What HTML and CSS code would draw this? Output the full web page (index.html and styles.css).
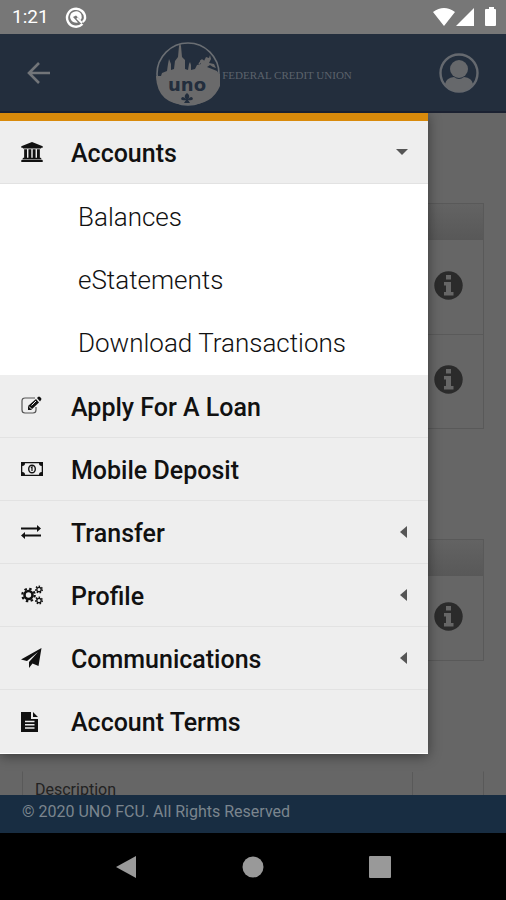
FILE: index.html
```html
<!DOCTYPE html>
<html lang="en">
<head>
<meta charset="utf-8">
<meta name="viewport" content="width=device-width, initial-scale=1">
<title>UNO Federal Credit Union</title>
<link rel="stylesheet" href="styles.css">
</head>
<body>
<div class="status">
  <span class="clock">1:21</span>
  <svg width="22" height="22" viewBox="0 0 22 22"><path d="M17.500 18A9 9 0 1 1 20 12.500Q19.500 15 17.500 16" fill="none" stroke="#fff" stroke-width="2.400"/><path d="M5 11a6 6 0 0 1 11.500-2q.8 3-.8 5L11 9.500 8 11l5 5.500Q6 17.500 5 11z" fill="#fff"/><path d="M12 12l5 5" stroke="#fff" stroke-width="2"/></svg>
  <svg class="signals" width="64" height="20" viewBox="0 0 64 20"><path d="M0 5Q11-3 22 5L11 19zM41 1V19H23zM53 2h3V0h5v2h1q1 0 1 1v15q0 1-1 1h-9q-1 0-1-1V3q0-1 1-1z" fill="#fff"/></svg>
</div>
<header class="bar">
  <button class="plain" aria-label="Back"><svg width="24" height="24" viewBox="0 0 24 24"><path d="M23 12H3M12 2L2 12l10 10" fill="none" stroke="#727579" stroke-width="2.600"/></svg></button>
  <a class="brand" href="#">
    <svg width="66" height="66" viewBox="0 0 66 66"><circle cx="34" cy="34" r="31" fill="none" stroke="#6a6e73" stroke-width="1.600"/><path d="M2 36h5l1-3 5-2 1-7 1-5 2 5v6l3-1 1-8 3-4 1-11 1-3 1 3 1 11 3 3v9l3 1 1-6 1-2 1 3v5l4-1 2-4 4-1-1-4 4 1 2-4 3 1 1-3 1 4-2 4 5 1 2 4-3-1-3-2-3 2 5 2 5 2 2 3h4Q65 65 34 65 3 65 2 36z" fill="#6a6a6b"/><path d="M45 24l3-4 3 2" fill="none" stroke="#6a6a6b" stroke-width="1.500"/><text class="logo-word" x="33" y="51" text-anchor="middle">uno</text><path d="M33 53q4 3 1 6 4-4 5 0-1 2-5 1l2 3h-6l2-3q-4 1-5-1 1-4 5 0-3-3 1-6z" fill="#232e3d"/></svg>
    <span>FEDERAL CREDIT UNION</span>
  </a>
  <button class="plain profile" aria-label="My profile"><svg width="40" height="40" viewBox="0 0 40 40"><circle cx="20" cy="20" r="18.500" fill="none" stroke="#65696f" stroke-width="2.400"/><path d="M6 31q1-6 9-7 5 4 10 0 8 1 9 7-5 8-14 8T6 31z" fill="#66686b"/><circle cx="20" cy="16" r="9" fill="#66686b"/></svg></button>
</header>
<main class="page">
  <div class="cards">
    <section class="card">
      <div class="card-head"></div>
      <div class="card-row"><button class="plain" aria-label="Details"><svg width="29" height="29" viewBox="0 0 29 29"><circle cx="14.500" cy="14.500" r="14.200" fill="#2b2b2b"/><path d="M12 4h5v4.500h-5zM10 11h7v10h2.500v3.500H10V21h2v-6.500h-2z" fill="#666"/></svg></button></div>
      <div class="card-row"><button class="plain" aria-label="Details"><svg width="29" height="29" viewBox="0 0 29 29"><circle cx="14.500" cy="14.500" r="14.200" fill="#2b2b2b"/><path d="M12 4h5v4.500h-5zM10 11h7v10h2.500v3.500H10V21h2v-6.500h-2z" fill="#666"/></svg></button></div>
    </section>
    <section class="card">
      <div class="card-head"></div>
      <div class="card-row short"><button class="plain" aria-label="Details"><svg width="29" height="29" viewBox="0 0 29 29"><circle cx="14.500" cy="14.500" r="14.200" fill="#2b2b2b"/><path d="M12 4h5v4.500h-5zM10 11h7v10h2.500v3.500H10V21h2v-6.500h-2z" fill="#666"/></svg></button></div>
    </section>
    <section class="card history">
      <div class="columns"><span>Description</span><span></span></div>
    </section>
  </div>
  <nav class="menu">
    <a class="item" href="#"><svg width="22" height="20" viewBox="0 0 1920 1792"><path d="M960 0l960 384v128h-128q0 26-20.500 45t-48.500 19h-1526q-28 0-48.500-19t-20.500-45h-128v-128zM256 640h256v768h128v-768h256v768h128v-768h256v768h128v-768h256v768h59q28 0 48.500 19t20.500 45v64h-1664v-64q0-26 20.500-45t48.500-19h59zM1851 1600q28 0 48.500 19t20.500 45v128h-1920v-128q0-26 20.500-45t48.500-19z"/></svg><span>Accounts</span><svg class="caret" width="12" height="12" viewBox="0 0 12 12"><path d="M0 3h12L6 9z"/></svg></a>
    <div class="submenu">
      <a href="#">Balances</a>
      <a href="#">eStatements</a>
      <a href="#">Download Transactions</a>
    </div>
    <a class="item" href="#"><svg width="22" height="20" viewBox="0 0 22 20"><path d="M14 2H4Q1 2 1 5v9q0 3 3 3h8q3 0 3-3v-3" fill="none" stroke="#555" stroke-width="1.200"/><path d="M7 14v-4l8-7 3 3.500-8 7.500zM16 2l1-1q1-1 2 0l1 1q1 1 0 2l-1 1.500z"/><path d="M8 10.500l2.500 2.500M10.500 9.500L15 5" stroke="#eee"/></svg><span>Apply For A Loan</span></a>
    <a class="item" href="#"><svg width="22" height="20" viewBox="0 0 22 20"><path fill-rule="evenodd" d="M0 3h22v14H0zM4 4.300Q4 7 1.300 7v6Q4 13 4 15.700h14q0-2.700 2.700-2.700V7Q18 7 18 4.300z"/><ellipse cx="11" cy="10" rx="3.300" ry="3.800" fill="none" stroke="#111" stroke-width="1.400"/><path d="M10 9l1-1v4" fill="none" stroke="#111" stroke-width="1.200"/></svg><span>Mobile Deposit</span></a>
    <a class="item" href="#"><svg width="22" height="20" viewBox="0 0 22 20"><path d="M0 5.500h16V3l4 3.500-4 3.500V7.500H0zM20 12.500H4V10l-4 3.500L4 17v-2.500h16z"/></svg><span>Transfer</span><svg class="caret" width="12" height="12" viewBox="0 0 12 12"><path d="M11 0v12L4 6z"/></svg></a>
    <a class="item" href="#"><svg width="22" height="20" viewBox="0 0 22 20"><g fill="none" stroke="#111"><circle cx="7.500" cy="10" r="4" stroke-width="2.600"/><circle cx="7.500" cy="10" r="6.200" stroke-width="2.200" stroke-dasharray="2.435 2.435"/><circle cx="18" cy="4.500" r="2.200" stroke-width="1.300"/><circle cx="18" cy="4.500" r="3.300" stroke-width="1.400" stroke-dasharray="1.480 1.480"/><circle cx="18" cy="15.500" r="2.200" stroke-width="1.300"/><circle cx="18" cy="15.500" r="3.300" stroke-width="1.400" stroke-dasharray="1.480 1.480"/></g></svg><span>Profile</span><svg class="caret" width="12" height="12" viewBox="0 0 12 12"><path d="M11 0v12L4 6z"/></svg></a>
    <a class="item" href="#"><svg width="22" height="20" viewBox="0 0 22 20"><path d="M20.500 0l-3 18-6-2.500L8 20v-6L17 4 6 13l-6-1.500z"/></svg><span>Communications</span><svg class="caret" width="12" height="12" viewBox="0 0 12 12"><path d="M11 0v12L4 6z"/></svg></a>
    <a class="item" href="#"><svg width="22" height="20" viewBox="0 0 22 20"><path d="M0 0h10v7h7v13H0zM12 0l5 5h-5z"/><path d="M4 9.500h9.500M4 12.700h9.500M4 16h9.500" stroke="#eee" stroke-width="1.400"/></svg><span>Account Terms</span></a>
  </nav>
</main>
<footer class="legal">© 2020 UNO FCU. All Rights Reserved</footer>
<div class="keys">
  <button class="plain" aria-label="Back"><svg width="22" height="24" viewBox="0 0 22 24"><path d="M21 1v22L1 12z" fill="#999"/></svg></button>
  <button class="plain" aria-label="Home"><svg width="22" height="24" viewBox="0 0 22 24"><circle cx="11" cy="12" r="10.500" fill="#999"/></svg></button>
  <button class="plain" aria-label="Recent apps"><svg width="22" height="24" viewBox="0 0 22 24"><rect y="1" width="22" height="22" rx="1" fill="#999"/></svg></button>
</div>
</body>
</html>
```
FILE: styles.css
```css
* { box-sizing: border-box; }
body {
  margin: 0;
  min-height: 100vh;
  display: flex;
  flex-direction: column;
  background: #666;
  color: #111;
  font-family: Roboto, sans-serif;
}
a { color: inherit; text-decoration: none; }
svg { display: block; flex: none; }
.plain { padding: 0; border: 0; background: none; }
.status {
  height: 34px;
  display: flex;
  align-items: center;
  gap: 16px;
  padding: 0 9px 0 12px;
  background: #777;
  color: #fff;
}
.clock { font-size: 19px; line-height: 24px; }
.signals { margin-left: auto; }
.bar {
  height: 79px;
  display: grid;
  grid-template-columns: 1fr auto 1fr;
  align-items: center;
  padding: 0 27px;
  background: #232e3d;
  border-bottom: 2px solid #1b2131;
}
.profile { justify-self: end; }
.brand {
  display: flex;
  align-items: center;
  gap: 2px;
  color: #5c636c;
  font: 11px/16px "Liberation Serif", serif;
}
.brand span { padding-top: 4px; }
.logo-word {
  fill: #232e3d;
  font: bold 18px "DejaVu Sans", sans-serif;
}
.page {
  position: relative;
  flex: 1;
  min-height: 682px;
  overflow: hidden;
}
.cards {
  position: absolute;
  inset: 0;
  display: flex;
  flex-direction: column;
  gap: 110px;
  padding: 90px 22px 0;
}
.card { border: 1px solid #595959; }
.card-head {
  height: 36px;
  background: linear-gradient(#636363, #585858);
}
.card-row {
  height: 94px;
  display: flex;
  align-items: center;
  justify-content: flex-end;
  padding: 0 20px 4px 0;
}
.card-row + .card-row { border-top: 1px solid #5a5a5a; }
.short { height: 84px; }
.history { border-top-color: transparent; }
.columns {
  display: grid;
  grid-template-columns: 1fr 71px;
  height: 48px;
  color: #222;
  font-size: 16px;
  line-height: 36px;
}
.columns span { padding-left: 12px; }
.columns span + span { border-left: 1px solid #595959; }
.menu {
  position: absolute;
  top: 0;
  left: 0;
  width: 85%;
  max-width: 428px;
  background: #fff;
  border-top: 8px solid #d98a0b;
  border-bottom: 1px solid #fff;
  box-shadow: 0 2px 12px rgba(0, 0, 0, .45);
}
.item {
  height: 63px;
  display: flex;
  align-items: center;
  gap: 28px;
  padding: 0 20px 0 21px;
  background: #eee;
  border-bottom: 1px solid #e2e2e2;
  font-size: 25px;
  font-weight: 500;
  line-height: 32px;
}
.item:last-child { border-bottom: 0; }
.item span { padding-top: 3px; }
.item svg { fill: #111; }
.item .caret { margin-left: auto; fill: #555; }
.submenu {
  display: grid;
  padding: 2px 0 0;
  font-size: 26px;
  font-weight: 300;
  line-height: 63px;
}
.submenu a { padding-left: 78px; }
.legal {
  height: 38px;
  padding: 0 22px;
  background: #182d42;
  color: #7b858e;
  font-size: 16px;
  line-height: 34px;
}
.keys {
  height: 67px;
  display: flex;
  align-items: center;
  justify-content: center;
  gap: 105px;
  background: #000;
}
```
